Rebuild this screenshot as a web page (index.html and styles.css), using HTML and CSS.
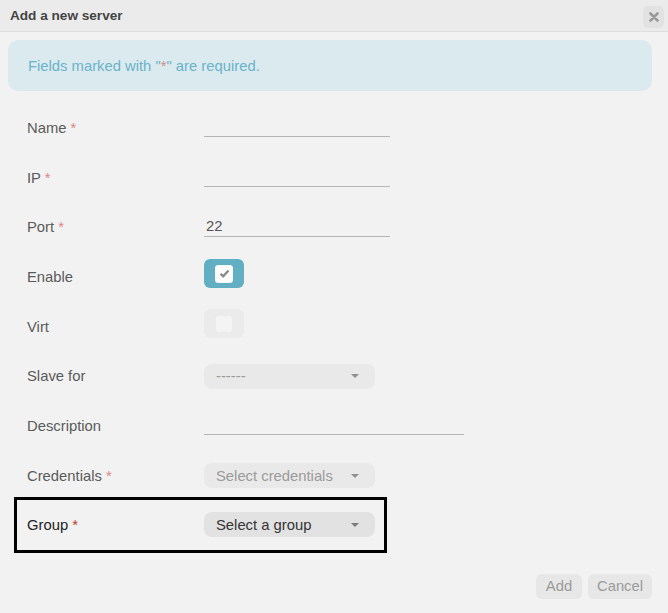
FILE: index.html
```html
<!DOCTYPE html>
<html lang="en">
<head>
    <meta charset="UTF-8" />
    <meta name="viewport" content="width=device-width, initial-scale=1.0">
    <title>Add a new server</title>
    <link rel="stylesheet" href="styles.css">
</head>
<body>
    <div class="dialog">
        <div class="dialog-header">
            <span class="dialog-title">Add a new server</span>
            <button class="close-btn" type="button" title="Close">
                <svg width="10" height="10" viewBox="0 0 10 10">
                    <path d="M1.5 1.5 L8.5 8.5 M8.5 1.5 L1.5 8.5" stroke="#9a9a9a" stroke-width="2.6" stroke-linecap="round"/>
                </svg>
            </button>
        </div>

        <div class="dialog-body">
            <div class="alert">Fields marked with "<span class="req">*</span>" are required.</div>

            <form class="server-form">
                <div class="form-row">
                    <label for="name">Name <span class="req">*</span></label>
                    <input type="text" id="name" class="line-input" />
                </div>

                <div class="form-row">
                    <label for="ip">IP <span class="req">*</span></label>
                    <input type="text" id="ip" class="line-input" />
                </div>

                <div class="form-row">
                    <label for="port">Port <span class="req">*</span></label>
                    <input type="text" id="port" class="line-input" value="22" />
                </div>

                <div class="form-row">
                    <label>Enable</label>
                    <span class="check checked"><span class="check-box">
                        <svg width="11" height="9" viewBox="0 0 11 9">
                            <path d="M1.5 4.8 L4.2 7.2 L9.5 1.5" fill="none" stroke="#8c8c8c" stroke-width="2.4"/>
                        </svg>
                    </span></span>
                </div>

                <div class="form-row">
                    <label>Virt</label>
                    <span class="check"><span class="check-box"></span></span>
                </div>

                <div class="form-row">
                    <label>Slave for</label>
                    <div class="select muted"><span>------</span><i class="caret"></i></div>
                </div>

                <div class="form-row">
                    <label for="desc">Description</label>
                    <input type="text" id="desc" class="line-input wide" />
                </div>

                <div class="form-row">
                    <label>Credentials <span class="req">*</span></label>
                    <div class="select muted"><span>Select credentials</span><i class="caret"></i></div>
                </div>

                <div class="form-row highlight">
                    <label class="dark">Group <span class="req dark-req">*</span></label>
                    <div class="select active"><span>Select a group</span><i class="caret"></i></div>
                </div>
            </form>

            <div class="actions">
                <button type="button" class="btn btn-add">Add</button>
                <button type="button" class="btn btn-cancel">Cancel</button>
            </div>
        </div>
    </div>
</body>
</html>
```

FILE: styles.css
```css
body {
    margin: 0;
    font-family: Arial, "Liberation Sans", sans-serif;
    font-size: 14.8px;
    background-color: #f2f2f2;
    color: #5a5a5a;
}

.dialog {
    width: 668px;
    height: 613px;
    background-color: #f2f2f2;
}

.dialog-header {
    height: 31px;
    display: flex;
    align-items: center;
    justify-content: space-between;
    padding: 0 4px 0 10px;
    background-color: #ebebeb;
    border-bottom: 1px solid #dedede;
}

.dialog-title {
    font-weight: bold;
    font-size: 13.6px;
    color: #444;
}

.close-btn {
    width: 21px;
    height: 22px;
    border: none;
    border-radius: 5px;
    background-color: #e2e2e2;
    padding: 0;
    display: flex;
    align-items: center;
    justify-content: center;
    margin-top: 2px;
}

.dialog-body {
    padding: 8px 16px 0 8px;
}

.alert {
    background-color: #dbeaee;
    color: #69b3cb;
    border-radius: 10px;
    height: 51px;
    line-height: 52px;
    padding-left: 20px;
}

.req {
    color: #e08585;
}

.server-form {
    padding-top: 12px;
}

.form-row {
    display: flex;
    align-items: center;
    height: 49.7px;
    padding-left: 19px;
}

.form-row label {
    width: 177px;
    flex-shrink: 0;
}

.line-input {
    width: 186px;
    height: 19px;
    box-sizing: border-box;
    border: none;
    border-bottom: 1px solid #b5b5b5;
    background: transparent;
    font-family: inherit;
    font-size: 14.8px;
    color: #555;
    padding: 0 0 1px 2px;
    outline: none;
}

.line-input.wide {
    width: 260px;
}

.check {
    width: 40px;
    height: 29px;
    border-radius: 6px;
    background-color: #ebebeb;
    display: flex;
    align-items: center;
    justify-content: center;
    margin-bottom: 6px;
}

.check.checked {
    background-color: #62afc4;
}

.check-box {
    width: 18px;
    height: 18px;
    border-radius: 3px;
    background-color: #f4f4f4;
    box-shadow: inset 0 0 2px rgba(0,0,0,0.12);
    display: flex;
    align-items: center;
    justify-content: center;
}

.checked .check-box {
    background-color: #ffffff;
}

.select {
    width: 171px;
    height: 25px;
    box-sizing: border-box;
    border-radius: 8px;
    background-color: #e9e9e9;
    display: flex;
    align-items: center;
    justify-content: space-between;
    padding: 0 16px 0 12px;
}

.select.muted {
    color: #9a9a9a;
}

.select.active {
    background-color: #e2e2e2;
    color: #333;
}

.caret {
    width: 0;
    height: 0;
    border-left: 4px solid transparent;
    border-right: 4px solid transparent;
    border-top: 4px solid #7a7a7a;
}

.muted .caret {
    border-top-color: #8f8f8f;
}

.highlight {
    box-sizing: border-box;
    border: 3px solid #000;
    height: 56px;
    margin: -4px 265px 0 6px;
    padding-left: 10px;
}

.form-row label.dark {
    color: #222;
}

.dark-req {
    color: #c0392b;
}

.actions {
    display: flex;
    justify-content: flex-end;
    gap: 6px;
    margin-top: 21px;
}

.btn {
    height: 25px;
    border: none;
    border-radius: 6px;
    background-color: #e7e7e7;
    color: #9a9a9a;
    font-family: inherit;
    font-size: 14.8px;
    padding: 0;
}

.btn-add {
    width: 46px;
}

.btn-cancel {
    width: 64px;
}
```
